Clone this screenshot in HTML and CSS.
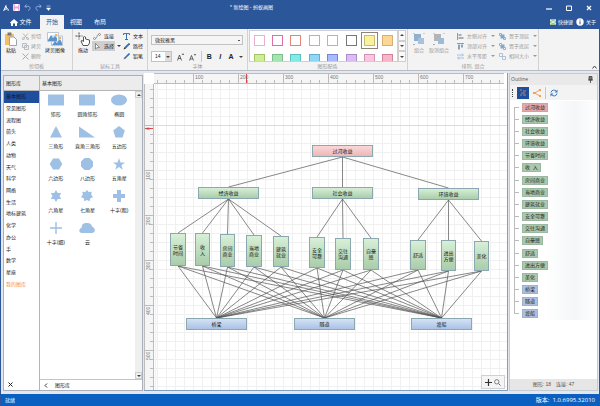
FILE: index.html
```
<!DOCTYPE html>
<html lang="zh-CN">
<head>
  <meta charset="UTF-8">
  <meta name="viewport" content="width=device-width, initial-scale=1.0">
  <title>新绘图 - 蚂蚁画图</title>
  <link rel="stylesheet" href="styles.css">
</head>
<body>
  <header class="titlebar">
    <div class="quick">
      <button aria-label="蚂蚁画图"><svg width="7" height="8" viewBox="0 0 7 8"><path d="M1 6L3 1.500V6M3 3L5 5.500M0.500 7L2 5M4.500 6h1.500" stroke="#fff" fill="none"/></svg></button>
      <button aria-label="保存"><svg width="7" height="7" viewBox="0 0 7 7"><path d="M0.500 0.500h6v6h-6z" fill="#e9a4dc" stroke="#f3d3f0"/><path d="M2 0h3v2.500H2zM2 4.500h3V7H2z" fill="#fff"/></svg></button>
      <button aria-label="撤销"><svg width="7" height="7" viewBox="0 0 7 7"><path d="M2.500 0.500L0.800 2.300L2.500 4M1 2.300h3c3 0 2.500 4 0 4" stroke="#8da9d4" fill="none"/></svg></button>
      <button aria-label="重做"><svg width="7" height="7" viewBox="0 0 7 7"><path d="M4.500 0.500L6.200 2.300L4.500 4M6 2.300H3c-3 0-2.500 4 0 4" stroke="#8da9d4" fill="none"/></svg></button>
      <button aria-label="自定义"><svg width="5" height="6" viewBox="0 0 5 6"><path d="M0.500 1h4M0.500 3h4L2.500 5.500z" fill="#fff" stroke="#fff" stroke-width="0.500"/></svg></button>
    </div>
    <h1 class="title">* 新绘图 - 蚂蚁画图</h1>
    <div class="window-buttons">
      <button aria-label="最小化"><svg width="6" height="6" viewBox="0 0 6 6"><path d="M0 4h6" stroke="#fff" stroke-width="1.200"/></svg></button>
      <button aria-label="最大化"><svg width="6" height="6" viewBox="0 0 6 6"><path d="M0.500 1h5v4.500h-5z" stroke="#fff" fill="none"/></svg></button>
      <button aria-label="关闭"><svg width="6" height="6" viewBox="0 0 6 6"><path d="M1 1l4 4M5 1L1 5" stroke="#fff" stroke-width="1.300"/></svg></button>
    </div>
  </header>

  <nav class="tabs">
    <button class="tab file"><svg width="8" height="7" viewBox="0 0 8 7"><path d="M0 3.500L4 0l4 3.500-0.700 0.700L7 4v3H5V4.500H3V7H1V4L0.600 4.200z" fill="#fff"/></svg>文件</button>
    <button class="tab active">开始</button>
    <button class="tab">视图</button>
    <button class="tab">布局</button>
    <div class="tab-links">
      <a href="#keys"><svg width="6" height="6" viewBox="0 0 6 6"><path d="M0 0h6v6H0z" fill="#9cc08e"/><path d="M0 1l6 4M6 1L0 5" stroke="#e8f1e4"/></svg>快捷键</a>
      <a href="#about"><svg width="8" height="8" viewBox="0 0 8 8"><circle cx="4" cy="4" r="3.700" fill="#fff"/><path d="M4 1.500v1M4 3.300v3" stroke="#2b579a"/></svg>关于</a>
    </div>
  </nav>

  <div class="ribbon">
    <section class="group clipboard">
      <div class="tools">
        <button class="big"><svg width="14" height="14" viewBox="0 0 14 14"><path d="M1 2h9v11H1z" fill="#efbf6c"/><path d="M3.500 0.500h4v3h-4z" fill="#777"/><path d="M5.500 5h4.500l2.500 2.500V13.500h-7z" fill="#fff" stroke="#9aa4b5"/></svg>粘贴</button>
        <div class="stack">
          <button class="small" disabled><svg width="7" height="7" viewBox="0 0 7 7"><path d="M1 0.500l4 4.500M6 0.500L2 5" stroke="#b5b5b5"/><circle cx="1.300" cy="5.700" r="1" fill="none" stroke="#b5b5b5"/><circle cx="5.700" cy="5.700" r="1" fill="none" stroke="#b5b5b5"/></svg>剪切</button>
          <button class="small" disabled><svg width="7" height="7" viewBox="0 0 7 7"><path d="M0.500 0.500h4v4h-4zM2.500 2.500h4v4h-4z" fill="#eee" stroke="#b9bcc4"/></svg>拷贝</button>
          <button class="small" disabled><svg width="7" height="7" viewBox="0 0 7 7"><path d="M0.500 0.500l6 6M6.500 0.500l-6 6" stroke="#aaa"/></svg>删除</button>
        </div>
        <button class="big"><svg width="16" height="14" viewBox="0 0 16 14"><path d="M0.500 0.500h11v9h-11zM4.500 4h11v9.500h-11z" fill="#fff" stroke="#b7c7dc"/><path d="M1 8l3-5 2 3 2-2 2 2v3H1zM5 13l3-4 2 2 3-4 2 4v2z" fill="#5d93cc"/><circle cx="9" cy="3" r="1.300" fill="#f0b45c"/><circle cx="13" cy="6" r="1.300" fill="#f0b45c"/></svg>拷贝图像</button>
      </div>
      <h2 class="caption">剪切板</h2>
    </section>

    <section class="group cursor-tools">
      <div class="tools">
        <button class="big"><svg width="16" height="14" viewBox="0 0 16 14"><path d="M4 0.500v7M0.500 4h7" stroke="#444" stroke-dasharray="2 1"/><path d="M8 13.500L6 9l1-0.500 1.500 1V5l1-0.500 1 0.500v2l4 1v3l-1.500 2.500z" fill="#fff" stroke="#555"/></svg>拖动</button>
        <div class="stack">
          <button class="small"><svg width="8" height="7" viewBox="0 0 8 7"><circle cx="1.500" cy="5.500" r="1" fill="none" stroke="#777" stroke-width="0.700"/><circle cx="6.500" cy="1.500" r="1" fill="none" stroke="#777" stroke-width="0.700"/><path d="M2.500 5.500C5 5 3 2 5.500 1.500" stroke="#777" fill="none" stroke-width="0.700"/></svg>连接</button>
          <button class="small pressed"><svg width="8" height="7" viewBox="0 0 8 7"><path d="M2.500 0.500v5.500l1.500-1.300 2.500-0.200z" fill="#fff" stroke="#666" stroke-width="0.700"/></svg>选择</button>
        </div>
        <button class="drop" aria-label="选择方式"></button>
        <div class="stack">
          <button class="small"><svg width="7" height="7" viewBox="0 0 7 7"><path d="M0.500 2V0.600h6V2M3.500 0.600V6.500M2 6.500h3" stroke="#3b70ad" fill="none"/></svg>文本</button>
          <button class="small"><svg width="7" height="7" viewBox="0 0 7 7"><path d="M0.500 6.500l1-2.500 1.500 1.500z" fill="#333"/><path d="M2 5l4.500-4.500" stroke="#356fb0" stroke-width="1.800"/></svg>路径</button>
          <button class="small"><svg width="7" height="7" viewBox="0 0 7 7"><path d="M0.500 6.500l1-2.500 1.500 1.500z" fill="#777"/><path d="M2 5l4.500-4.500" stroke="#356fb0" stroke-width="1.600"/></svg>铅笔</button>
        </div>
      </div>
      <h2 class="caption">鼠标工具</h2>
    </section>

    <section class="group font">
      <div class="font-tools">
        <select class="combo" aria-label="字体"><option>微软雅黑</option></select>
        <div class="font-row">
          <div class="size-box">
            <select class="combo size" aria-label="字号"><option>14</option></select>
            <span class="drop"></span>
          </div>
          <button aria-label="增大字号"><svg width="7" height="8" viewBox="0 0 7 8"><path d="M0.500 7.500L2.500 2l2 5.500M1.200 5.500h2.700M5 2l1-1.300L7 2" stroke="#444" fill="none" stroke-width="0.800"/></svg></button>
          <button aria-label="减小字号"><svg width="7" height="8" viewBox="0 0 7 8"><path d="M0.500 7.500L2.500 2.500l2 5M1.200 6h2.700M5 1l1 1.300L7 1" stroke="#444" fill="none" stroke-width="0.800"/></svg></button>
          <span class="rule"></span>
          <button class="bold">B</button>
          <button class="italic">I</button>
          <button class="bold">A</button>
          <button class="drop" aria-label="字体颜色"></button>
        </div>
      </div>
      <h2 class="caption">字体</h2>
    </section>

    <section class="group colors">
      <div class="gallery">
        <div class="swatches">
          <button class="swatch s1" aria-label="粉框"></button>
          <button class="swatch s2" aria-label="玫红框"></button>
          <button class="swatch s3" aria-label="红框"></button>
          <button class="swatch s4" aria-label="金框"></button>
          <button class="swatch s5" aria-label="浅灰框"></button>
          <button class="swatch s6" aria-label="灰框"></button>
          <button class="swatch s7 chosen" aria-label="黄色"></button>
          <button class="swatch s8" aria-label="橙色"></button>
          <button class="swatch s9" aria-label="黄绿"></button>
          <button class="swatch s10" aria-label="绿色"></button>
          <button class="swatch s11" aria-label="青色"></button>
          <button class="swatch s12" aria-label="天蓝"></button>
          <button class="swatch s13" aria-label="蓝色"></button>
          <button class="swatch s14" aria-label="紫色"></button>
          <button class="swatch s15" aria-label="粉色"></button>
          <button class="swatch s16" aria-label="玫红"></button>
        </div>
        <div class="spinner">
          <button class="drop up" aria-label="上一行"></button>
          <button class="drop" aria-label="下一行"></button>
          <button class="drop" aria-label="更多"></button>
        </div>
      </div>
      <h2 class="caption">图形配色</h2>
    </section>

    <section class="group arrange">
      <div class="tools">
        <button class="big" disabled><svg width="12" height="12" viewBox="0 0 12 12"><path d="M1 1h7v7H1z" fill="#8fb0d0"/><path d="M5 5h6v6H5z" fill="#a9c1da"/><path d="M0 0h2M10 0h2M0 11.500h2" stroke="#aaa"/></svg>组合</button>
        <button class="big" disabled><svg width="12" height="12" viewBox="0 0 12 12"><path d="M1 1h7v7H1z" fill="#b4b4b4"/><path d="M5 5h6v6H5z" fill="#9dbbd9"/><path d="M0 0h2M10 0h2M0 11.500h2" stroke="#aaa"/></svg>取消组合</button>
        <span class="rule"></span>
        <div class="stack">
          <button class="small" disabled><svg width="7" height="7" viewBox="0 0 7 7"><path d="M0.500 0v7" stroke="#999"/><path d="M1.500 1h3v2h-3zM1.500 4h5v2h-5z" fill="#a5adb8"/></svg>左侧对齐<i class="arrow"></i></button>
          <button class="small" disabled><svg width="7" height="7" viewBox="0 0 7 7"><path d="M0 0.500h7" stroke="#999"/><path d="M1 1.500h2v5H1zM4 1.500h2v3H4z" fill="#8ba2bb"/></svg>顶部对齐<i class="arrow"></i></button>
          <button class="small" disabled><svg width="7" height="7" viewBox="0 0 7 7"><path d="M0 2h6M5 0.500L6.500 2L5 3.500M7 5H1M2 3.500L0.500 5L2 6.500" stroke="#8fb3d9" fill="none" stroke-width="0.800"/></svg>水平等距<i class="arrow"></i></button>
        </div>
        <div class="stack">
          <button class="small" disabled><svg width="7" height="7" viewBox="0 0 7 7"><path d="M0.500 0.500h2v2h-2zM4.500 4.500h2v2h-2z" fill="#fff" stroke="#aaa"/><path d="M1.500 1.500h4v4h-4z" fill="#7fa7cf"/></svg>置于顶层<i class="arrow"></i></button>
          <button class="small" disabled><svg width="7" height="7" viewBox="0 0 7 7"><path d="M1.500 1.500h4v4h-4z" fill="#7fa7cf"/><path d="M0.500 0.500h2v2h-2zM4.500 4.500h2v2h-2z" fill="#fff" stroke="#aaa"/></svg>置于底层<i class="arrow"></i></button>
          <button class="small" disabled><svg width="7" height="7" viewBox="0 0 7 7"><path d="M0.500 0.500h3v3h-3zM3.500 3.500h3v3h-3z" fill="#f3f6fa" stroke="#9db6d1" stroke-width="0.800"/></svg>相同大小<i class="arrow"></i></button>
        </div>
      </div>
      <h2 class="caption">排列, 组合</h2>
    </section>
    <button class="collapse" aria-label="折叠功能区"><svg width="5" height="4" viewBox="0 0 5 4"><path d="M0.500 3.500l2-2.500 2 2.500" stroke="#444" fill="none"/></svg></button>
  </div>

  <main class="workspace">
    <aside class="library">
      <div class="categories">
        <h2 class="head">图形库</h2>
        <div class="category-list">
          <button class="category current">基本图形</button>
          <button class="category">常见图形</button>
          <button class="category">流程图</button>
          <button class="category">箭头</button>
          <button class="category">人类</button>
          <button class="category">动物</button>
          <button class="category">天气</button>
          <button class="category">科学</button>
          <button class="category">网络</button>
          <button class="category">生活</button>
          <button class="category">地标建筑</button>
          <button class="category">化学</button>
          <button class="category">办公</button>
          <button class="category">手</button>
          <button class="category">数学</button>
          <button class="category">星座</button>
          <button class="category mine">我的图库</button>
        </div>
        <button class="close" aria-label="关闭图形库"><svg width="5" height="5" viewBox="0 0 5 5"><path d="M0.500 0.500l4 4M4.500 0.500l-4 4" stroke="#222"/></svg></button>
      </div>
      <div class="shapes">
        <h2 class="head">基本图形</h2>
        <div class="shape-area">
          <div class="shape-grid">
            <button class="shape"><svg viewBox="0 0 16 12"><path d="M0 0.500h16v11H0z"/></svg>矩形</button>
            <button class="shape"><svg viewBox="0 0 16 12"><rect y="0.500" width="16" height="11" rx="1"/></svg>圆角矩形</button>
            <button class="shape"><svg viewBox="0 0 16 12"><ellipse cx="8" cy="6" rx="8" ry="5.500"/></svg>椭圆</button>
            <button class="shape"><svg viewBox="0 0 16 12"><path d="M8 0l6 11.500H2z"/></svg>三角形</button>
            <button class="shape"><svg viewBox="0 0 16 12"><path d="M0 0.500l16 11H0z"/></svg>直角三角形</button>
            <button class="shape"><svg viewBox="0 0 16 12"><path d="M8 0l5.800 4.500-2.200 7H4.400l-2.200-7z"/></svg>五边形</button>
            <button class="shape"><svg viewBox="0 0 16 12"><path d="M5 0.500h6L14.300 6 11 11.500H5L1.700 6z"/></svg>六边形</button>
            <button class="shape"><svg viewBox="0 0 16 12"><path d="M5.600 0h4.800L14 3.600v4.800L10.400 12H5.600L2 8.400V3.600z"/></svg>八边形</button>
            <button class="shape"><svg viewBox="0 0 16 12"><path d="M8 0l1.500 4.400H14l-3.600 2.800 1.300 4.500L8 9l-3.700 2.700 1.300-4.500L2 4.400h4.500z"/></svg>五角星</button>
            <button class="shape"><svg viewBox="0 0 16 12"><path d="M8 0l1.700 3h3.500L11.500 6l1.700 3H9.700L8 12 6.300 9H2.800l1.700-3-1.700-3h3.500z"/></svg>六角星</button>
            <button class="shape"><svg viewBox="0 0 16 12"><path d="M8 0l1.700 2 3-0.200-0.500 2.800L14 7.300l-2.700 1-0.700 3L8 10l-2.600 1.300-0.700-3-2.700-1 1.800-2.700-0.500-2.800 3 0.200z"/></svg>七角星</button>
            <button class="shape"><svg viewBox="0 0 16 12"><path d="M6 0h4v4h4v4h-4v4H6V8H2V4h4z"/></svg>十字(粗)</button>
            <button class="shape"><svg viewBox="0 0 16 12"><path d="M7.300 0h1.400v5.300H14v1.400H8.700V12H7.300V6.700H2V5.300h5.300z"/></svg>十字(细)</button>
            <button class="shape"><svg viewBox="0 0 16 12"><path d="M3 11C-0.500 11-0.500 6.500 2.500 6 2.500 2.500 5 0.500 7.500 1c3-0.500 5 1 5.500 3.500 3.500 1.500 4 5.500 0.500 6.500z"/></svg>云</button>
          </div>
          <div class="scrollbar">
            <button class="drop up" aria-label="向上滚动"></button>
            <button class="drop" aria-label="向下滚动"></button>
          </div>
        </div>
        <button class="back"><svg width="4" height="5" viewBox="0 0 4 5"><path d="M3 0.500l-2 2 2 2" stroke="#333" fill="none"/></svg>图形库</button>
      </div>
    </aside>

    <section class="editor">
      <div class="ruler-x">
        <span class="mark">100</span><span class="mark cursor-mark">200</span><span class="mark">300</span><span class="mark">400</span><span class="mark">500</span><span class="mark">600</span><span class="mark">700</span>
      </div>
      <div class="ruler-y">
        <span class="mark">0</span><span class="mark">100</span><span class="mark">200</span><span class="mark">300</span><span class="mark">400</span><span class="mark">500</span>
      </div>
      <div class="canvas">
        <svg id="diagram" class="diagram" width="350" height="306" viewBox="0 0 350 306">
          <defs>
            <linearGradient id="pink" x2="0" y2="1"><stop offset="0" stop-color="#fbdada"/><stop offset="1" stop-color="#eeb4b6"/></linearGradient>
            <linearGradient id="green" x2="0" y2="1"><stop offset="0" stop-color="#d8f0d8"/><stop offset="1" stop-color="#a8cca9"/></linearGradient>
            <linearGradient id="blue" x2="0" y2="1"><stop offset="0" stop-color="#d5e3f7"/><stop offset="1" stop-color="#a9c1e3"/></linearGradient>
          </defs>
        </svg>
        <div class="zoom-box">
          <button aria-label="移动"><svg width="7" height="7" viewBox="0 0 7 7"><path d="M3.500 0v7M0 3.500h7" stroke="#333" stroke-width="1.200"/></svg></button>
          <button aria-label="缩放"><svg width="7" height="7" viewBox="0 0 7 7"><circle cx="2.800" cy="2.800" r="2.200" fill="none" stroke="#666" stroke-width="0.800"/><path d="M4.500 4.500l2 2" stroke="#666"/></svg></button>
        </div>
      </div>
    </section>

    <aside class="outline">
      <h2 class="outline-head">Outline<svg width="5" height="7" viewBox="0 0 5 7"><path d="M1 0.500h3v3.500H1zM0 4h5M2.500 4v3" fill="#777" stroke="#444" stroke-width="0.800"/></svg></h2>
      <div class="outline-tools">
        <span class="grip"></span>
        <button class="on" aria-label="大纲"><svg width="8" height="8" viewBox="0 0 8 8"><path d="M1 1h2M4 2h3M2 4h4M1 6h2M4 6h3" stroke="#b98973"/></svg></button>
        <button aria-label="树形"><svg width="8" height="8" viewBox="0 0 8 8"><path d="M7 1L1.500 4L7 7" stroke="#f2a055" fill="none"/><path d="M6 0h2v2H6zM0 3h2v2H0zM6 6h2v2H6z" fill="#f2a055"/></svg></button>
        <span class="rule"></span>
        <button aria-label="刷新"><svg width="8" height="8" viewBox="0 0 8 8"><path d="M1 3.500A3 3 0 0 1 6.500 2.500M7 4.500A3 3 0 0 1 1.500 5.500" stroke="#3a79bd" fill="none"/><path d="M7.500 0.500v3h-3zM0.500 7.500v-3h3z" fill="#3a79bd"/></svg></button>
      </div>
      <ul class="tree">
        <li><span class="tag pink">过河收益</span></li>
        <li><span class="tag">经济收益</span></li>
        <li><span class="tag">社会收益</span></li>
        <li><span class="tag">环境收益</span></li>
        <li><span class="tag">节省时间</span></li>
        <li><span class="tag">收&nbsp; 入</span></li>
        <li><span class="tag">房间商业</span></li>
        <li><span class="tag">当地商业</span></li>
        <li><span class="tag">建筑就业</span></li>
        <li><span class="tag">安全可靠</span></li>
        <li><span class="tag">交往沟通</span></li>
        <li><span class="tag">自豪感</span></li>
        <li><span class="tag">舒适</span></li>
        <li><span class="tag">进出方便</span></li>
        <li><span class="tag">美化</span></li>
        <li><span class="tag blue">桥梁</span></li>
        <li><span class="tag blue">隧道</span></li>
        <li><span class="tag blue">渡船</span></li>
      </ul>
      <p class="counts"><span>图形: 18</span><span>连接: 47</span></p>
    </aside>
  </main>

  <footer class="status"><span>就绪</span><span class="version">版本:&nbsp; 1.0.6995.32010</span></footer>

  <script src="script.js"></script>
</body>
</html>
```
FILE: styles.css
```
* {
  box-sizing: border-box;
}

body {
  margin: 0;
  height: 100vh;
  display: flex;
  flex-direction: column;
  overflow: hidden;
  border: solid #2b579a;
  border-width: 0 1px;
  background: #e4e8ee;
  color: #222;
  font: 5px/7px "Liberation Sans", "Noto Sans CJK SC", sans-serif;
}

h1, h2, p, ul {
  margin: 0;
  padding: 0;
  font: inherit;
  list-style: none;
}

button, select {
  margin: 0;
  padding: 0;
  border: 0;
  border-radius: 0;
  background: none;
  color: inherit;
  font: inherit;
  white-space: nowrap;
}

svg {
  display: block;
  flex: none;
}

.rule {
  width: 1px;
  background: #c8c8c8;
}

/* small triangle used by every drop-down */
.drop, .arrow {
  display: flex;
  align-items: center;
  justify-content: center;
}

.drop::after, .arrow::after {
  content: "";
  border: solid transparent;
  border-width: 2px 2px 0;
  border-top-color: #444;
}

.arrow::after {
  border-top-color: #999;
}

.drop.up::after {
  border-width: 0 2px 2px;
  border-bottom-color: #444;
}

/* title bar and tabs */
.titlebar {
  flex: none;
  display: grid;
  grid-template-columns: 1fr auto 1fr;
  align-items: center;
  height: 15px;
  padding: 0 7px 0 2px;
  background: #2b579a;
  color: #fff;
}

.quick, .window-buttons {
  display: flex;
  align-items: center;
}

.quick {
  gap: 3px;
}

.quick button:nth-child(n+3) {
  margin-left: 1px;
}

.title {
  padding-right: 92px;
  white-space: nowrap;
}

.window-buttons {
  justify-content: flex-end;
  gap: 14px;
}

.tabs {
  flex: none;
  display: flex;
  height: 14px;
  padding-left: 1px;
  background: #2b579a;
  color: #fff;
  font-size: 6px;
}

.tab {
  display: flex;
  align-items: center;
  justify-content: center;
  gap: 1px;
  width: 24px;
}

.tab.file {
  width: 38px;
}

.tab.active {
  background: #f3f3f3;
  color: #2b579a;
}

.tab-links {
  display: flex;
  align-items: center;
  gap: 3px;
  margin-left: auto;
  padding-right: 3px;
  font-size: 5px;
}

.tab-links a {
  display: flex;
  align-items: center;
  gap: 2px;
  color: #fff;
  text-decoration: none;
}

/* ribbon */
.ribbon {
  flex: none;
  display: flex;
  height: 42px;
  border-bottom: 1px solid #b9bdc3;
  background: #f3f3f3;
}

.group {
  display: flex;
  flex-direction: column;
  border-right: 1px solid #d2d2d2;
}

.clipboard {
  width: 72px;
}

.cursor-tools {
  width: 75px;
}

.font {
  width: 100px;
}

.colors {
  width: 160px;
}

.arrange {
  width: 131px;
}

.caption {
  margin-top: auto;
  color: #999;
  text-align: center;
}

.tools {
  display: flex;
  gap: 3px;
  padding: 2px 3px 0;
}

.cursor-tools .tools {
  gap: 1px;
  padding: 2px 2px 0;
}

.big {
  display: flex;
  flex-direction: column;
  align-items: center;
  gap: 1px;
  height: 23px;
}

.big svg {
  margin: auto;
}

.stack {
  display: flex;
  flex-direction: column;
}

.small {
  display: flex;
  align-items: center;
  gap: 2px;
  height: 10px;
  padding: 0 1px;
}

.cursor-tools .small {
  gap: 3px;
}

.pressed {
  background: #cfcfcf;
}

.ribbon button:disabled {
  color: #999;
}

.cursor-tools .drop {
  width: 5px;
  height: 10px;
  margin-top: 10px;
}

.font-tools {
  display: flex;
  flex-direction: column;
  gap: 6px;
  padding: 6px 4px 0 3px;
}

.combo {
  appearance: none;
  width: 100%;
  height: 10px;
  padding: 0 3px;
  border: 1px solid #c2c2c2;
  background: #f5f5f5 linear-gradient(#555, #555) right 2px center / 2px 1px no-repeat;
}

.size-box {
  display: flex;
  width: 21px;
  border: 1px solid #c2c2c2;
}

.size-box .drop {
  flex: none;
  width: 6px;
  background: #ddd;
}

.combo.size {
  height: 9px;
  border: 0;
  background: #fff;
}

.font-row {
  display: flex;
  align-items: center;
  gap: 5px;
}

.font-row .rule {
  height: 11px;
}

.font-row .bold {
  width: 6px;
  font-size: 7px;
  font-weight: bold;
}

.font-row .italic {
  width: 6px;
  font-size: 7px;
  font-style: italic;
  font-weight: bold;
}

.gallery {
  display: flex;
  height: 33px;
  padding: 1px 1px 0;
}

.swatches {
  flex: 1;
  display: grid;
  grid-template-columns: repeat(8, 1fr);
  grid-auto-rows: 19px;
  place-items: center;
  overflow: hidden;
  border: 1px solid #cfcfcf;
  background: #fff;
}

.swatch {
  width: 11px;
  height: 11px;
  border: 1px solid #bbb;
}

.chosen {
  outline: 1px solid #8c8577;
  outline-offset: 2px;
}

.s1 { border-color: #eab0cd; }
.s2 { border-color: #dd6fa8; }
.s3 { border-color: #e58478; }
.s4 { border-color: #d0b26c; }
.s5 { border-color: #b5b5b5; }
.s6 { border-color: #777; }
.s7 { background: #fbf09c; border-color: #c9bd74; }
.s8 { background: #fbd793; border-color: #d6b071; }
.s9 { background: #cdee93; border-color: #a4c46c; }
.s10 { background: #a5e6b0; border-color: #7fbf8b; }
.s11 { background: #80ece8; border-color: #61bfc0; }
.s12 { background: #8ed7f7; border-color: #6baccc; }
.s13 { background: #aabaff; border-color: #7888cf; }
.s14 { background: #dcbdf3; border-color: #ae8cc8; }
.s15 { background: #ffc3e2; border-color: #d294b3; }
.s16 { background: #fbb5ca; border-color: #cf8499; }

.spinner {
  display: grid;
  width: 8px;
}

.spinner .drop {
  border: 1px solid #cfcfcf;
  background: #fafafa;
}

.arrange .tools {
  gap: 4px;
  padding-left: 5px;
}

.arrange .small {
  gap: 3px;
  padding: 0;
}

.arrange .rule {
  height: 28px;
}

.arrow {
  width: 5px;
}

.collapse {
  margin: auto 2px 1px auto;
}

/* work area */
.workspace {
  flex: 1;
  min-height: 0;
  display: grid;
  grid-template-columns: 140px 1fr 90px;
  gap: 1px;
  padding: 2px 0 3px 2px;
}

.library {
  display: grid;
  grid-template-columns: 36px 1fr;
  margin-top: 2px;
  border: 1px solid #aab0b9;
  background: #fff;
}

.categories, .shapes {
  display: flex;
  flex-direction: column;
  min-height: 0;
}

.categories {
  border-right: 1px solid #b5b5b5;
}

.head {
  height: 15px;
  padding: 4px 2px;
  border-bottom: 1px solid #b5b5b5;
  background: #ececec;
}

.category-list {
  display: grid;
  grid-auto-rows: 1fr;
  height: 199px;
}

.category {
  padding-left: 2px;
  text-align: left;
}

.category.current {
  background: #1f4e9c;
  color: #0b1730;
}

.category.mine {
  color: #f5923c;
}

.close {
  margin: auto 0 3px 4px;
  align-self: flex-start;
}

.shape-area {
  flex: 1;
  display: flex;
}

.shape-grid {
  flex: 1;
  display: grid;
  grid-template-columns: repeat(3, 1fr);
  grid-auto-rows: 32px;
  align-content: start;
}

.shape {
  display: flex;
  flex-direction: column;
  align-items: center;
  justify-content: flex-start;
  gap: 5px;
  padding-top: 3px;
}

.shape svg {
  width: 16px;
  height: 12px;
  fill: #9dc0e4;
}

.scrollbar {
  display: flex;
  flex-direction: column;
  justify-content: space-between;
  width: 7px;
  background: #efefef;
}

.scrollbar .drop {
  height: 7px;
  border: 1px solid #cfcfcf;
}

.back {
  display: flex;
  align-items: center;
  gap: 7px;
  height: 11px;
  padding-left: 4px;
  border-top: 1px solid #c4c4c4;
}

/* canvas with rulers, one grid cell is 9px */
.editor {
  display: grid;
  grid-template: 11px 1fr / 10px 1fr;
  min-width: 0;
  min-height: 0;
  border-right: 1px solid #7f9fc2;
  border-bottom: 1px solid #7f9fc2;
  background: #fff;
}

.ruler-x {
  grid-column: 2;
  display: flex;
  overflow: hidden;
  margin-right: 3px;
  padding-left: 39px;
  border: solid #bcbcbc;
  border-width: 1px 0;
  background: repeating-linear-gradient(90deg, #bbb 0 1px, transparent 1px 9px) 3px bottom / 100% 3px no-repeat #f5f5f5;
  color: #777;
}

.ruler-x .mark {
  flex: none;
  width: 45px;
  padding-left: 1px;
  border-left: 1px solid #bbb;
  line-height: 6px;
}

.cursor-mark {
  background: linear-gradient(#e04545, #e04545) 7px 0 / 1px 100% no-repeat;
}

.ruler-y {
  grid-column: 1;
  display: flex;
  flex-direction: column;
  overflow: hidden;
  padding-top: 41px;
  border: solid #bcbcbc;
  border-width: 0 1px;
  background: repeating-linear-gradient(#bbb 0 1px, transparent 1px 9px) right 5px / 3px 100% no-repeat #f5f5f5;
  color: #777;
}

.ruler-y .mark {
  flex: none;
  height: 45px;
  padding-bottom: 1px;
  border-bottom: 1px solid #bbb;
  line-height: 6px;
  writing-mode: vertical-rl;
  transform: rotate(180deg);
  text-align: right;
}

.ruler-y .mark:first-child {
  background: linear-gradient(#e04545, #e04545) 0 41px / 100% 1px no-repeat;
}

.canvas {
  position: relative;
  overflow: hidden;
  background:
    linear-gradient(#dcdcdc, #dcdcdc) 0 41px / 100% 1px no-repeat,
    repeating-linear-gradient(90deg, #f0f0f0 0 1px, transparent 1px 9px) 3px 0,
    repeating-linear-gradient(#f0f0f0 0 1px, transparent 1px 9px) 0 5px;
}

.diagram text {
  font-size: 5px;
  text-anchor: middle;
  fill: #111;
}

.diagram line {
  stroke: #555;
  stroke-width: 0.700;
}

.diagram rect {
  stroke: #8ba7b0;
  stroke-width: 1;
}

.zoom-box {
  position: absolute;
  right: 2px;
  bottom: 1px;
  display: flex;
  align-items: center;
  gap: 2px;
  height: 14px;
  padding: 0 3px;
  border: 1px solid #d0d0d0;
  background: #f5f5f5;
}

/* outline */
.outline {
  display: flex;
  flex-direction: column;
  margin: 0 1px 0 0;
  border: 1px solid #c5cbd3;
  background: #fff;
}

.outline-head {
  display: flex;
  align-items: center;
  justify-content: space-between;
  height: 11px;
  padding: 0 4px 0 1px;
  background: #e9e9e9;
  color: #555;
  font-size: 5px;
  font-family: "Open Sans", sans-serif;
}

.outline-tools {
  display: flex;
  align-items: center;
  gap: 4px;
  height: 15px;
  padding-left: 2px;
  background: #f3f3f3;
}

.outline-tools .rule {
  height: 12px;
}

.outline-tools .on {
  padding: 2px;
  background: #1f4e9c;
}

.grip {
  height: 8px;
  border-left: 1px dotted #444;
}

.tree {
  display: grid;
  grid-auto-rows: 1fr;
  height: 219px;
  margin-top: 1px;
  background: linear-gradient(90deg, #fff 40%, #f4f6f8 75%, #fff);
}

.tree li {
  display: flex;
  align-items: center;
  padding-left: 4px;
  background: linear-gradient(#bbb, #bbb) 4px 0 / 1px 100% no-repeat;
}

.tree li:first-child {
  background-position: 4px 6px;
}

.tree li:last-child {
  background-size: 1px 6px;
}

.tree li::before {
  content: "";
  width: 5px;
  height: 1px;
  margin-right: 3px;
  background: #bbb;
}

.tag {
  padding: 0 2px;
  border: 1px solid #9cb8a1;
  background: #a9c9ae;
}

.tag.pink {
  border-color: #d79da1;
  background: #e3a9ad;
}

.tag.blue {
  border-color: #a0b1d0;
  background: #afc0de;
}

.counts {
  display: flex;
  justify-content: center;
  gap: 5px;
  margin-top: auto;
  padding: 2px 0;
  background: #e6e6e6;
  color: #555;
}

.status {
  flex: none;
  display: flex;
  align-items: center;
  justify-content: space-between;
  height: 12px;
  margin: 0 -1px;
  padding: 0 5px;
  background: #0a60c0;
  color: #fff;
  font-family: "Open Sans", "Noto Sans CJK SC", sans-serif;
}

.version {
  font-size: 6px;
}
```
FILE: script.js
```
const svg = document.getElementById('diagram');

// x, y, width, height, lines of text, fill, parent
const nodes = [
  [158, 61, 61, 12, ['过河收益'], 'pink'],
  [44, 103, 61, 12, ['经济收益'], 'green', 0],
  [158, 103, 61, 12, ['社会收益'], 'green', 0],
  [264, 104, 61, 12, ['环境收益'], 'green', 0],
  [16, 149, 16, 33, ['节省', '时间'], 'green', 1],
  [41, 149, 15, 33, ['收', '入'], 'green', 1],
  [66, 150, 15, 33, ['房间', '商业'], 'green', 1],
  [92, 151, 16, 32, ['当地', '商业'], 'green', 1],
  [119, 152, 16, 31, ['建筑', '就业'], 'green', 1],
  [155, 153, 16, 31, ['安全', '可靠'], 'green', 2],
  [181, 154, 16, 32, ['交往', '沟通'], 'green', 2],
  [209, 154, 16, 32, ['自豪', '感'], 'green', 2],
  [256, 156, 16, 30, ['舒适'], 'green', 3],
  [287, 156, 15, 31, ['进出', '方便'], 'green', 3],
  [320, 157, 15, 30, ['美化'], 'green', 3],
  [32, 234, 61, 12, ['桥梁'], 'blue'],
  [140, 234, 61, 12, ['隧道'], 'blue'],
  [257, 234, 61, 12, ['渡船'], 'blue']
];

function add(name, attrs, text) {
  const el = document.createElementNS('http://www.w3.org/2000/svg', name);
  for (const key in attrs) el.setAttribute(key, attrs[key]);
  if (text) el.textContent = text;
  svg.appendChild(el);
}

function link(a, b) {
  add('line', { x1: a[0] + a[2] / 2, y1: a[1] + a[3], x2: b[0] + b[2] / 2, y2: b[1] });
}

nodes.forEach(node => {
  if (node[6] !== undefined) link(nodes[node[6]], node);
});

// every benefit is linked to each of the three crossings
nodes.slice(4, 15).forEach(leaf => {
  nodes.slice(15).forEach(crossing => link(leaf, crossing));
});

nodes.forEach(([x, y, width, height, lines, fill]) => {
  add('rect', { x: x + 0.5, y: y + 0.5, width: width - 1, height: height - 1, fill: `url(#${fill})` });
  lines.forEach((line, i) => {
    const middle = y + height / 2 + 2 + (i - (lines.length - 1) / 2) * 6;
    add('text', { x: x + width / 2, y: middle }, line);
  });
});
```
